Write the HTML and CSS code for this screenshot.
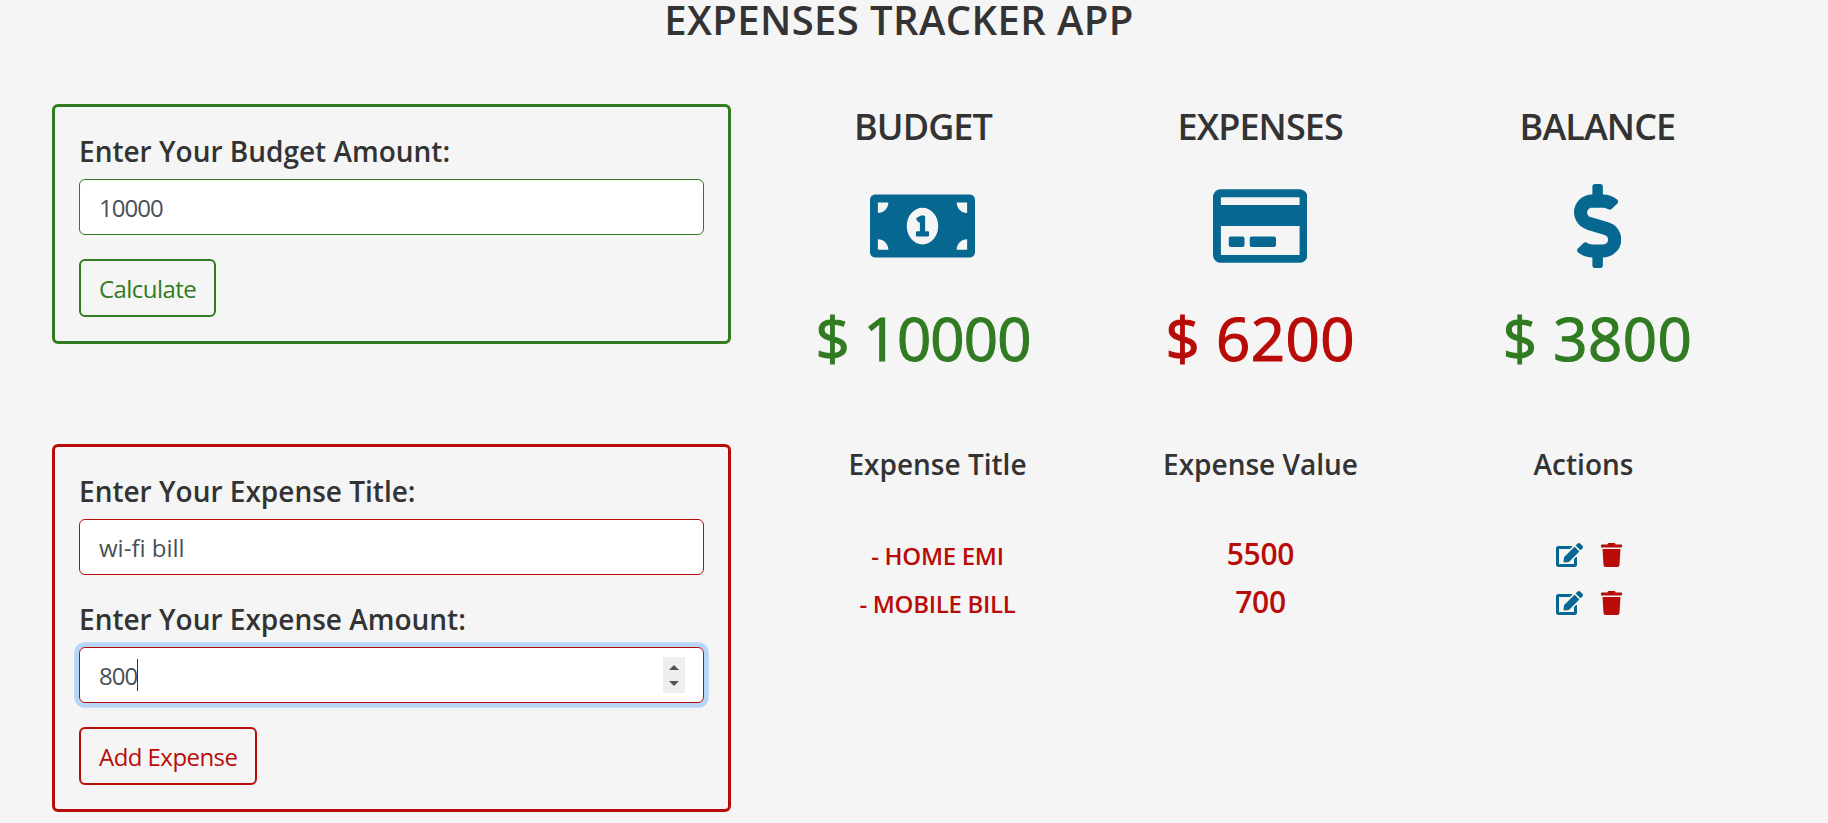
FILE: index.html
```html
<!DOCTYPE html>
<html lang="en">
<head>
<meta charset="utf-8">
<title>Expenses Tracker App</title>
<link rel="stylesheet" href="styles.css">
</head>
<body>
<h1 class="title">EXPENSES TRACKER APP</h1>
<main class="layout">
  <section class="forms">
    <form class="box box-green">
      <label class="label" for="budget">Enter Your Budget Amount:</label>
      <input class="field field-green field-num" id="budget" type="text" value="10000">
      <button class="btn btn-green" type="button">Calculate</button>
    </form>
    <form class="box box-red">
      <label class="label" for="title">Enter Your Expense Title:</label>
      <input class="field field-red field-gap" id="title" type="text" value="wi-fi bill">
      <label class="label" for="amount">Enter Your Expense Amount:</label>
      <div class="field-wrap">
        <input class="field field-red field-num" id="amount" type="number" value="800" autofocus>
        <span class="caret"></span>
        <span class="spinner">
          <svg class="spin-arrow" viewBox="0 0 10 5"><path d="M5 0l5 5H0z"/></svg>
          <svg class="spin-arrow" viewBox="0 0 10 5"><path d="M0 0h10L5 5z"/></svg>
        </span>
      </div>
      <button class="btn btn-red" type="button">Add Expense</button>
    </form>
  </section>
  <section class="summary">
    <div class="stats">
      <div class="stat">
        <h2 class="stat-title">BUDGET</h2>
        <svg class="stat-icon" viewBox="0 0 640 512"><path d="M352 288h-16v-88c0-4.42-3.58-8-8-8h-13.58c-4.74 0-9.37 1.4-13.31 4.03l-15.33 10.22a7.99 7.99 0 0 0-2.22 11.09l8.88 13.31a7.99 7.99 0 0 0 11.09 2.22l.47-.31V288h-16c-4.42 0-8 3.58-8 8v16c0 4.42 3.58 8 8 8h64c4.42 0 8-3.58 8-8v-16c0-4.42-3.58-8-8-8zM608 64H32C14.33 64 0 78.33 0 96v320c0 17.67 14.33 32 32 32h576c17.67 0 32-14.33 32-32V96c0-17.67-14.33-32-32-32zM48 400v-64c35.35 0 64 28.65 64 64H48zm0-224v-64h64c0 35.35-28.65 64-64 64zm272 192c-53.02 0-96-50.15-96-112 0-61.86 42.98-112 96-112s96 50.14 96 112c0 61.87-42.98 112-96 112zm272 32h-64c0-35.35 28.65-64 64-64v64zm0-224c-35.35 0-64-28.65-64-64h64v64z"/></svg>
        <p class="stat-value green">$ 10000</p>
      </div>
      <div class="stat">
        <h2 class="stat-title">EXPENSES</h2>
        <svg class="stat-icon" viewBox="0 0 576 512"><path d="M527.9 32H48.1C21.5 32 0 53.5 0 80v352c0 26.5 21.5 48 48.1 48h479.8c26.6 0 48.1-21.5 48.1-48V80c0-26.5-21.5-48-48.1-48zM54.1 80h467.8c3.3 0 6 2.7 6 6v42H48.1V86c0-3.3 2.7-6 6-6zm467.8 352H54.1c-3.3 0-6-2.7-6-6V256h479.8v170c0 3.3-2.7 6-6 6zM192 332v40c0 6.6-5.4 12-12 12h-72c-6.6 0-12-5.4-12-12v-40c0-6.6 5.4-12 12-12h72c6.6 0 12 5.4 12 12zm192 0v40c0 6.6-5.4 12-12 12H236c-6.6 0-12-5.4-12-12v-40c0-6.6 5.4-12 12-12h136c6.6 0 12 5.4 12 12z"/></svg>
        <p class="stat-value stat-value-short red">$ 6200</p>
      </div>
      <div class="stat">
        <h2 class="stat-title">BALANCE</h2>
        <svg class="stat-icon" viewBox="0 0 288 512"><path d="M209.2 233.4l-108-31.6C88.7 198.2 80 186.5 80 173.5c0-16.3 13.2-29.5 29.5-29.5h66.3c12.2 0 24.2 3.7 34.2 10.5 6.1 4.1 14.3 3.1 19.5-2l34.8-34c7.1-6.9 6.1-18.4-1.8-24.5C238 74.8 207.4 64.1 176 64V16c0-8.8-7.2-16-16-16h-32c-8.8 0-16 7.2-16 16v48h-2.5C45.8 64-5.4 118.7.5 183.6c4.2 46.1 39.4 83.6 83.8 96.6l102.5 30c12.5 3.7 21.2 15.3 21.2 28.3 0 16.3-13.2 29.5-29.5 29.5h-66.3C100 368 88 364.3 78 357.5c-6.1-4.1-14.3-3.1-19.5 2l-34.8 34c-7.1 6.9-6.1 18.4 1.8 24.5 24.5 19.2 55.1 29.9 86.5 30v48c0 8.8 7.2 16 16 16h32c8.8 0 16-7.2 16-16v-48.2c46.6-.9 90.3-28.6 105.7-72.7 21.5-61.6-14.6-124.8-72.5-141.7z"/></svg>
        <p class="stat-value stat-value-short green">$ 3800</p>
      </div>
    </div>
    <div class="list">
      <div class="list-row list-head">
        <h3 class="head-cell">Expense Title</h3>
        <h3 class="head-cell">Expense Value</h3>
        <h3 class="head-cell">Actions</h3>
      </div>
      <div class="list-row list-item">
        <span class="item-name">- HOME EMI</span>
        <span class="item-value">5500</span>
        <span class="item-actions">
          <svg class="icon-edit" viewBox="0 0 576 512"><path d="M402.6 83.2l90.2 90.2c3.8 3.8 3.8 10 0 13.8L274.4 405.6l-92.8 10.3c-12.4 1.4-22.9-9.1-21.5-21.5l10.3-92.8L388.8 83.2c3.8-3.8 10-3.8 13.8 0zm162-22.9l-48.8-48.8c-15.2-15.2-39.9-15.2-55.2 0l-35.4 35.4c-3.8 3.8-3.8 10 0 13.8l90.2 90.2c3.8 3.8 10 3.8 13.8 0l35.4-35.4c15.2-15.3 15.2-40 0-55.2zM384 346.2V448H64V128h229.8c3.2 0 6.2-1.3 8.5-3.5l40-40c7.6-7.6 2.2-20.5-8.5-20.5H48C21.5 64 0 85.5 0 112v352c0 26.5 21.5 48 48 48h352c26.5 0 48-21.5 48-48V306.2c0-10.7-12.9-16-20.5-8.5l-40 40c-2.2 2.3-3.5 5.3-3.5 8.5z"/></svg>
          <svg class="icon-trash" viewBox="0 0 448 512"><path d="M432 32H312l-9.4-18.7A24 24 0 0 0 281.1 0H166.8a23.72 23.72 0 0 0-21.4 13.3L136 32H16A16 16 0 0 0 0 48v32a16 16 0 0 0 16 16h416a16 16 0 0 0 16-16V48a16 16 0 0 0-16-16zM53.2 467a48 48 0 0 0 47.9 45h245.8a48 48 0 0 0 47.9-45L416 128H32z"/></svg>
        </span>
      </div>
      <div class="list-row list-item">
        <span class="item-name">- MOBILE BILL</span>
        <span class="item-value">700</span>
        <span class="item-actions">
          <svg class="icon-edit" viewBox="0 0 576 512"><path d="M402.6 83.2l90.2 90.2c3.8 3.8 3.8 10 0 13.8L274.4 405.6l-92.8 10.3c-12.4 1.4-22.9-9.1-21.5-21.5l10.3-92.8L388.8 83.2c3.8-3.8 10-3.8 13.8 0zm162-22.9l-48.8-48.8c-15.2-15.2-39.9-15.2-55.2 0l-35.4 35.4c-3.8 3.8-3.8 10 0 13.8l90.2 90.2c3.8 3.8 10 3.8 13.8 0l35.4-35.4c15.2-15.3 15.2-40 0-55.2zM384 346.2V448H64V128h229.8c3.2 0 6.2-1.3 8.5-3.5l40-40c7.6-7.6 2.2-20.5-8.5-20.5H48C21.5 64 0 85.5 0 112v352c0 26.5 21.5 48 48 48h352c26.5 0 48-21.5 48-48V306.2c0-10.7-12.9-16-20.5-8.5l-40 40c-2.2 2.3-3.5 5.3-3.5 8.5z"/></svg>
          <svg class="icon-trash" viewBox="0 0 448 512"><path d="M432 32H312l-9.4-18.7A24 24 0 0 0 281.1 0H166.8a23.72 23.72 0 0 0-21.4 13.3L136 32H16A16 16 0 0 0 0 48v32a16 16 0 0 0 16 16h416a16 16 0 0 0 16-16V48a16 16 0 0 0-16-16zM53.2 467a48 48 0 0 0 47.9 45h245.8a48 48 0 0 0 47.9-45L416 128H32z"/></svg>
        </span>
      </div>
    </div>
  </section>
</main>
</body>
</html>
```
FILE: styles.css
```css
* { box-sizing: border-box; }
html, body { margin: 0; height: 823px; overflow: hidden; }
body {
  background: #f5f5f5;
  color: #333;
  font-family: "Open Sans", "Noto Sans", sans-serif;
  font-size: 24px;
}
.title {
  width: 1798px;
  height: 40px;
  margin: 0;
  font-size: 40px;
  font-weight: 600;
  line-height: 40px;
  text-align: center;
  letter-spacing: 0.4px;
}
.layout { display: flex; padding: 64px 62px 0 52px; }
.forms { width: 679px; display: flex; flex-direction: column; gap: 100px; }
.box {
  display: flex;
  flex-direction: column;
  align-items: flex-start;
  padding: 24px;
  border: 3px solid;
  border-radius: 6px;
}
.box-green { border-color: #317b22; }
.box-red { border-color: #b80c09; }
.label {
  height: 36px;
  margin-bottom: 12px;
  font-size: 28px;
  font-weight: 600;
  line-height: 40px;
}
.field-wrap { position: relative; width: 100%; }
.field {
  display: block;
  width: 100%;
  height: 56px;
  padding: 0 19px;
  background: #fff;
  border: 1px solid;
  border-radius: 6px;
  color: #495057;
  caret-color: transparent;
  font: inherit;
  outline: none;
  appearance: textfield;
}
.field-gap { margin-bottom: 24px; }
.field-num { letter-spacing: -1px; }
.field-green { border-color: #317b22; }
.field-red { border-color: #b80c09; }
.field:focus { box-shadow: 0 0 0 4.8px rgba(0, 123, 255, 0.25); }
.field::-webkit-inner-spin-button { display: none; }
.caret {
  position: absolute;
  top: 12px;
  left: 58px;
  width: 1px;
  height: 32px;
  background: #333;
}
.spinner {
  position: absolute;
  top: 10px;
  right: 19px;
  display: flex;
  flex-direction: column;
  align-items: center;
  justify-content: center;
  gap: 11px;
  width: 22px;
  height: 36px;
  background: #efefef;
}
.spin-arrow { width: 10px; height: 5px; fill: #505050; }
.btn {
  height: 58px;
  margin-top: 24px;
  padding: 0 18px;
  background: transparent;
  border: 2px solid;
  border-radius: 6px;
  font: inherit;
  letter-spacing: -0.55px;
}
.btn-green { border-color: #317b22; color: #317b22; }
.btn-red { border-color: #b80c09; color: #b80c09; }
.summary { flex: 1; margin-left: 23.4px; }
.stats { display: grid; grid-template-columns: repeat(3, 1fr); }
.stat { display: flex; flex-direction: column; align-items: center; }
.stat-title {
  margin: 1px 0 0;
  font-size: 36px;
  font-weight: 600;
  line-height: 44px;
  letter-spacing: -0.9px;
}
.stat-icon { width: auto; height: 84px; margin-top: 35px; fill: #066791; }
.stat-value {
  margin: 30px 0 0;
  font-size: 60px;
  font-weight: 400;
  -webkit-text-stroke: 1.2px currentColor;
  line-height: 80px;
  letter-spacing: -0.9px;
}
.stat-value-short { letter-spacing: 0.4px; }
.green { color: #317b22; }
.red { color: #b80c09; }
.list { margin: 66px 21px 0 21.6px; }
.list-row { display: grid; grid-template-columns: repeat(3, 1fr); justify-items: center; align-items: center; }
.head-cell { margin: 0; font-size: 28px; font-weight: 600; line-height: 40px; }
.list-head { margin-bottom: 47px; }
.list-item { height: 48px; color: #b80c09; font-weight: 600; }
.item-name { font-size: 24px; letter-spacing: -0.3px; }
.item-value { margin-bottom: 4px; font-size: 30px; letter-spacing: -0.3px; }
.item-actions { display: flex; gap: 18px; margin-left: 12px; }
.icon-edit { width: 27px; height: 24px; fill: #066791; }
.icon-trash { width: 21px; height: 24px; fill: #b80c09; }
```
